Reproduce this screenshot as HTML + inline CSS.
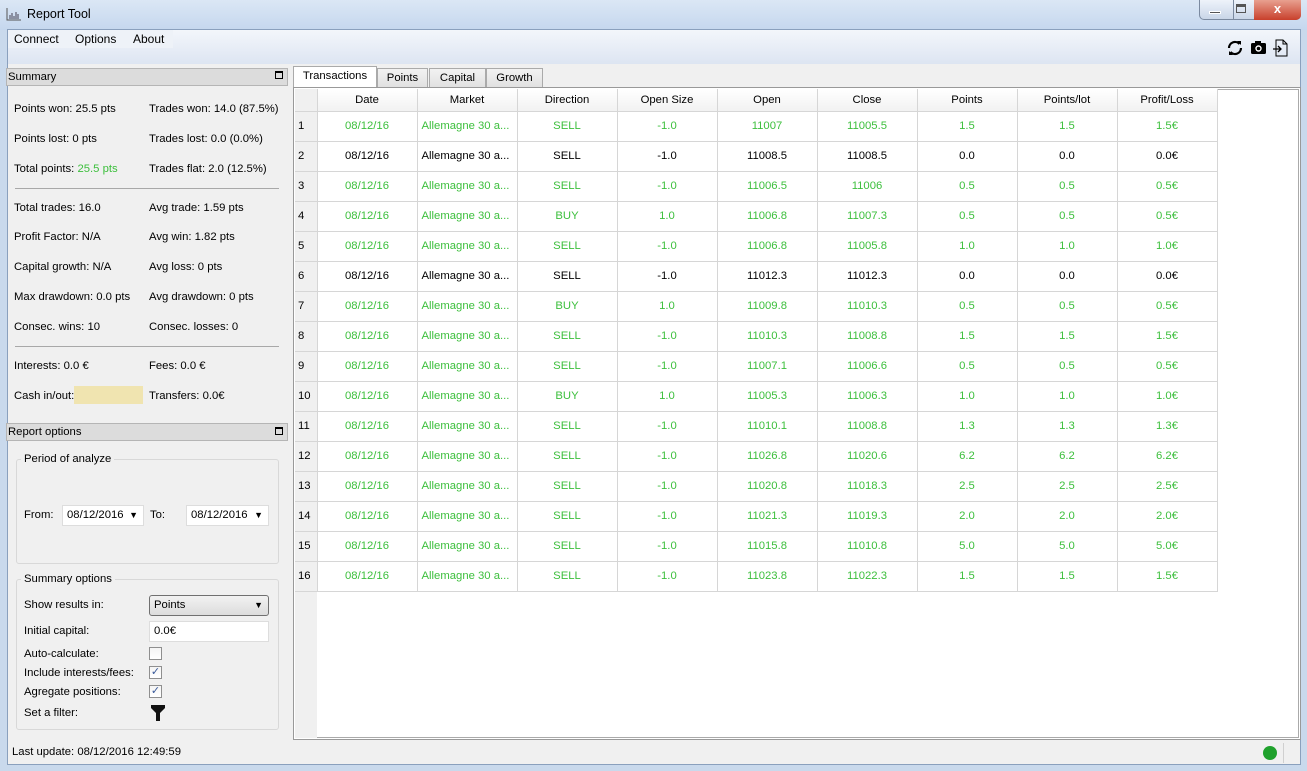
<!DOCTYPE html>
<html><head><meta charset="utf-8"><style>
*{box-sizing:border-box;margin:0;padding:0}
body{width:1307px;height:771px;overflow:hidden;background:#c9d9ec;font-family:"Liberation Sans",sans-serif;font-size:11.3px;color:#000;position:relative}
.a{position:absolute}
.g{color:#3cbf3c}
.title{left:0;top:0;width:1307px;height:30px;background:linear-gradient(#dbe7f5,#c5d7ee)}
.client{left:7px;top:29px;width:1294px;height:736px;background:#f0f0f0;border:1px solid #8aa0bd}
.menubar{left:8px;top:30px;width:1292px;height:34px;background:linear-gradient(#f3f6fb,#dde5f2)}
.menu{left:8px;top:30px;width:165px;height:18px;background:#eef2f8}
.dockh{height:18px;background:#dcdcdc;border:1px solid #b5b5b5;padding-left:1px;line-height:16px}
.fl{border:1px solid #d8d8d8;border-radius:3px}
.hr{height:1px;background:#a8a8a8}
table{border-collapse:collapse;position:absolute;left:295px;top:89px;table-layout:fixed}
td,th{height:30px;text-align:center;border-right:1px solid #d6d6d6;border-bottom:1px solid #d6d6d6;font-weight:normal;white-space:nowrap;background:#fff;overflow:hidden}
th{height:22px;background:linear-gradient(#fff,#f2f2f2)}
td.rh,th.rh{width:22px;text-align:left;padding-left:3px;background:#f0f0f0;color:#000}
td.m{text-align:left;padding-left:4px}
.cb{width:13px;height:13px;border:1px solid #8f8f8f;background:linear-gradient(#f4f4f4,#fff);font-size:11px;line-height:11px;text-align:center;color:#3a5a9a}
.combo{height:21px;border:1px solid #aaa;background:#fff;padding-left:4px;line-height:19px}
.tab{top:68px;height:20px;border:1px solid #aaa;border-bottom:none;background:linear-gradient(#f2f2f2,#e0e0e0);text-align:center;line-height:19px}
</style></head><body>
<div class="a title"></div>
<svg class="a" style="left:6px;top:7px" width="16" height="14"><path d="M1 1v12h14" stroke="#555" fill="none"/><path d="M4 12V8M6 12V6M8 12V9M10 12V5M12 12V7" stroke="#667" stroke-width="1.3"/></svg>
<div class="a" style="left:27px;top:7px;font-size:12.5px">Report Tool</div>
<div class="a" style="left:1199px;top:0;width:102px;height:20px;border:1px solid #7b8aa0;border-top:none;border-radius:0 0 5px 5px;background:linear-gradient(#eef3fa,#c9d6e8)"></div>
<div class="a" style="left:1233px;top:0;width:1px;height:20px;background:#7b8aa0"></div>
<div class="a" style="left:1254px;top:0;width:47px;height:20px;background:linear-gradient(#e8a090,#c8402c);border-radius:0 0 5px 0;color:#fff;font-weight:bold;text-align:center;line-height:18px;font-size:13px">x</div>
<div class="a" style="left:1209px;top:11px;width:12px;height:3px;background:#555;border:1px solid #fff"></div>
<div class="a" style="left:1236px;top:4px;width:10px;height:9px;border:1px solid #555;border-top-width:3px"></div>
<div class="a client"></div>
<div class="a menubar"></div>
<div class="a menu"></div>
<div class="a" style="left:14px;top:32px;font-size:12px">Connect</div>
<div class="a" style="left:75px;top:32px;font-size:12px">Options</div>
<div class="a" style="left:133px;top:32px;font-size:12px">About</div>
<svg class="a" style="left:1226px;top:39px" width="64" height="18">
<path d="M3 9a6 6 0 0 1 10.5-4M15 9a6 6 0 0 1-10.5 4" stroke="#000" stroke-width="2.2" fill="none"/><path d="M11 2l4 0 0 4zM7 16l-4 0 0-4z" fill="#000"/>
<rect x="25" y="4" width="15" height="11" rx="1.5" fill="#000"/><rect x="29" y="2" width="6" height="3" fill="#000"/><circle cx="32.5" cy="9.5" r="3.2" fill="#fff"/><circle cx="32.5" cy="9.5" r="1.8" fill="#000"/>
<path d="M50 1h7l4 4v12h-11z M57 1v4h4" stroke="#000" fill="none"/><path d="M47 10h8M52 7l3 3-3 3" stroke="#000" fill="none" stroke-width="1.3"/></svg>
<div class="a dockh" style="left:6px;top:68px;width:282px">Summary</div>
<div class="a" style="left:275px;top:71px;width:8px;height:8px;border:1px solid #000;border-top-width:2px"></div>
<div class="a" style="left:14px;top:103px">Points won: 25.5 pts</div><div class="a" style="left:149px;top:103px">Trades won: 14.0 (87.5%)</div>
<div class="a" style="left:14px;top:133px">Points lost: 0 pts</div><div class="a" style="left:149px;top:133px">Trades lost: 0.0 (0.0%)</div>
<div class="a" style="left:14px;top:163px">Total points: <span class="g">25.5 pts</span></div><div class="a" style="left:149px;top:163px">Trades flat: 2.0 (12.5%)</div>
<div class="a hr" style="left:15px;top:188px;width:264px"></div>
<div class="a" style="left:14px;top:202px">Total trades: 16.0</div><div class="a" style="left:149px;top:202px">Avg trade: 1.59 pts</div>
<div class="a" style="left:14px;top:231px">Profit Factor: N/A</div><div class="a" style="left:149px;top:231px">Avg win: 1.82 pts</div>
<div class="a" style="left:14px;top:261px">Capital growth: N/A</div><div class="a" style="left:149px;top:261px">Avg loss: 0 pts</div>
<div class="a" style="left:14px;top:291px">Max drawdown: 0.0 pts</div><div class="a" style="left:149px;top:291px">Avg drawdown: 0 pts</div>
<div class="a" style="left:14px;top:321px">Consec. wins: 10</div><div class="a" style="left:149px;top:321px">Consec. losses: 0</div>
<div class="a hr" style="left:15px;top:346px;width:264px"></div>
<div class="a" style="left:14px;top:360px">Interests: 0.0 €</div><div class="a" style="left:149px;top:360px">Fees: 0.0 €</div>
<div class="a" style="left:14px;top:390px">Cash in/out:</div><div class="a" style="left:74px;top:386px;width:69px;height:18px;background:#f0e4b0"></div><div class="a" style="left:149px;top:390px">Transfers: 0.0€</div>
<div class="a dockh" style="left:6px;top:423px;width:282px">Report options</div>
<div class="a" style="left:275px;top:427px;width:8px;height:8px;border:1px solid #000;border-top-width:2px"></div>
<div class="a fl" style="left:16px;top:459px;width:263px;height:105px"></div>
<div class="a" style="left:21px;top:453px;background:#f0f0f0;padding:0 3px">Period of analyze</div>
<div class="a" style="left:24px;top:509px">From:</div>
<div class="a combo" style="left:62px;top:505px;width:82px;border-color:#ddd">08/12/2016<span style="position:absolute;right:5px;font-size:9px">▼</span></div>
<div class="a" style="left:150px;top:509px">To:</div>
<div class="a combo" style="left:186px;top:505px;width:83px;border-color:#ddd">08/12/2016<span style="position:absolute;right:5px;font-size:9px">▼</span></div>
<div class="a fl" style="left:16px;top:579px;width:263px;height:151px"></div>
<div class="a" style="left:21px;top:573px;background:#f0f0f0;padding:0 3px">Summary options</div>
<div class="a" style="left:24px;top:599px">Show results in:</div>
<div class="a combo" style="left:149px;top:595px;width:120px;border-color:#707070;border-radius:3px;background:linear-gradient(#f2f2f2,#dcdcdc)">Points<span style="position:absolute;right:5px;font-size:9px">▼</span></div>
<div class="a" style="left:24px;top:625px">Initial capital:</div>
<div class="a combo" style="left:149px;top:621px;width:120px;border-color:#ddd">0.0€</div>
<div class="a" style="left:24px;top:648px">Auto-calculate:</div><div class="a cb" style="left:149px;top:647px"></div>
<div class="a" style="left:24px;top:667px">Include interests/fees:</div><div class="a cb" style="left:149px;top:666px">✓</div>
<div class="a" style="left:24px;top:686px">Agregate positions:</div><div class="a cb" style="left:149px;top:685px">✓</div>
<div class="a" style="left:24px;top:707px">Set a filter:</div>
<svg class="a" style="left:151px;top:705px" width="14" height="16"><path d="M0 0h14v3l-5 5v8h-4v-8l-5-5z" fill="#111"/></svg>
<div class="a" style="left:12px;top:746px">Last update: 08/12/2016 12:49:59</div>
<div class="a" style="left:1263px;top:746px;width:14px;height:14px;border-radius:50%;background:#1fa12c"></div>
<div class="a" style="left:1283px;top:743px;width:1px;height:20px;background:#d0d0d0"></div>
<div class="a tab" style="left:293px;top:66px;height:23px;width:84px;background:#fff">Transactions</div>
<div class="a tab" style="left:377px;width:51px">Points</div>
<div class="a tab" style="left:429px;width:57px">Capital</div>
<div class="a tab" style="left:486px;width:57px">Growth</div>
<div class="a" style="left:293px;top:87px;width:1008px;height:653px;border:1px solid #999;background:#fff;box-shadow:inset 0 0 0 1px #fff,inset 0 0 0 2px #aaa"></div>
<div class="a" style="left:295px;top:89px;width:22px;height:649px;background:#f0f0f0"></div>
<table>
<tr><th class="rh"></th><th style="width:100px">Date</th><th style="width:100px">Market</th><th style="width:100px">Direction</th><th style="width:100px">Open Size</th><th style="width:100px">Open</th><th style="width:100px">Close</th><th style="width:100px">Points</th><th style="width:100px">Points/lot</th><th style="width:100px">Profit/Loss</th></tr>
<tr class="g"><td class="rh">1</td><td>08/12/16</td><td class="m">Allemagne 30 a...</td><td>SELL</td><td>-1.0</td><td>11007</td><td>11005.5</td><td>1.5</td><td>1.5</td><td>1.5€</td></tr>
<tr><td class="rh">2</td><td>08/12/16</td><td class="m">Allemagne 30 a...</td><td>SELL</td><td>-1.0</td><td>11008.5</td><td>11008.5</td><td>0.0</td><td>0.0</td><td>0.0€</td></tr>
<tr class="g"><td class="rh">3</td><td>08/12/16</td><td class="m">Allemagne 30 a...</td><td>SELL</td><td>-1.0</td><td>11006.5</td><td>11006</td><td>0.5</td><td>0.5</td><td>0.5€</td></tr>
<tr class="g"><td class="rh">4</td><td>08/12/16</td><td class="m">Allemagne 30 a...</td><td>BUY</td><td>1.0</td><td>11006.8</td><td>11007.3</td><td>0.5</td><td>0.5</td><td>0.5€</td></tr>
<tr class="g"><td class="rh">5</td><td>08/12/16</td><td class="m">Allemagne 30 a...</td><td>SELL</td><td>-1.0</td><td>11006.8</td><td>11005.8</td><td>1.0</td><td>1.0</td><td>1.0€</td></tr>
<tr><td class="rh">6</td><td>08/12/16</td><td class="m">Allemagne 30 a...</td><td>SELL</td><td>-1.0</td><td>11012.3</td><td>11012.3</td><td>0.0</td><td>0.0</td><td>0.0€</td></tr>
<tr class="g"><td class="rh">7</td><td>08/12/16</td><td class="m">Allemagne 30 a...</td><td>BUY</td><td>1.0</td><td>11009.8</td><td>11010.3</td><td>0.5</td><td>0.5</td><td>0.5€</td></tr>
<tr class="g"><td class="rh">8</td><td>08/12/16</td><td class="m">Allemagne 30 a...</td><td>SELL</td><td>-1.0</td><td>11010.3</td><td>11008.8</td><td>1.5</td><td>1.5</td><td>1.5€</td></tr>
<tr class="g"><td class="rh">9</td><td>08/12/16</td><td class="m">Allemagne 30 a...</td><td>SELL</td><td>-1.0</td><td>11007.1</td><td>11006.6</td><td>0.5</td><td>0.5</td><td>0.5€</td></tr>
<tr class="g"><td class="rh">10</td><td>08/12/16</td><td class="m">Allemagne 30 a...</td><td>BUY</td><td>1.0</td><td>11005.3</td><td>11006.3</td><td>1.0</td><td>1.0</td><td>1.0€</td></tr>
<tr class="g"><td class="rh">11</td><td>08/12/16</td><td class="m">Allemagne 30 a...</td><td>SELL</td><td>-1.0</td><td>11010.1</td><td>11008.8</td><td>1.3</td><td>1.3</td><td>1.3€</td></tr>
<tr class="g"><td class="rh">12</td><td>08/12/16</td><td class="m">Allemagne 30 a...</td><td>SELL</td><td>-1.0</td><td>11026.8</td><td>11020.6</td><td>6.2</td><td>6.2</td><td>6.2€</td></tr>
<tr class="g"><td class="rh">13</td><td>08/12/16</td><td class="m">Allemagne 30 a...</td><td>SELL</td><td>-1.0</td><td>11020.8</td><td>11018.3</td><td>2.5</td><td>2.5</td><td>2.5€</td></tr>
<tr class="g"><td class="rh">14</td><td>08/12/16</td><td class="m">Allemagne 30 a...</td><td>SELL</td><td>-1.0</td><td>11021.3</td><td>11019.3</td><td>2.0</td><td>2.0</td><td>2.0€</td></tr>
<tr class="g"><td class="rh">15</td><td>08/12/16</td><td class="m">Allemagne 30 a...</td><td>SELL</td><td>-1.0</td><td>11015.8</td><td>11010.8</td><td>5.0</td><td>5.0</td><td>5.0€</td></tr>
<tr class="g"><td class="rh">16</td><td>08/12/16</td><td class="m">Allemagne 30 a...</td><td>SELL</td><td>-1.0</td><td>11023.8</td><td>11022.3</td><td>1.5</td><td>1.5</td><td>1.5€</td></tr>
</table>
</body></html>
